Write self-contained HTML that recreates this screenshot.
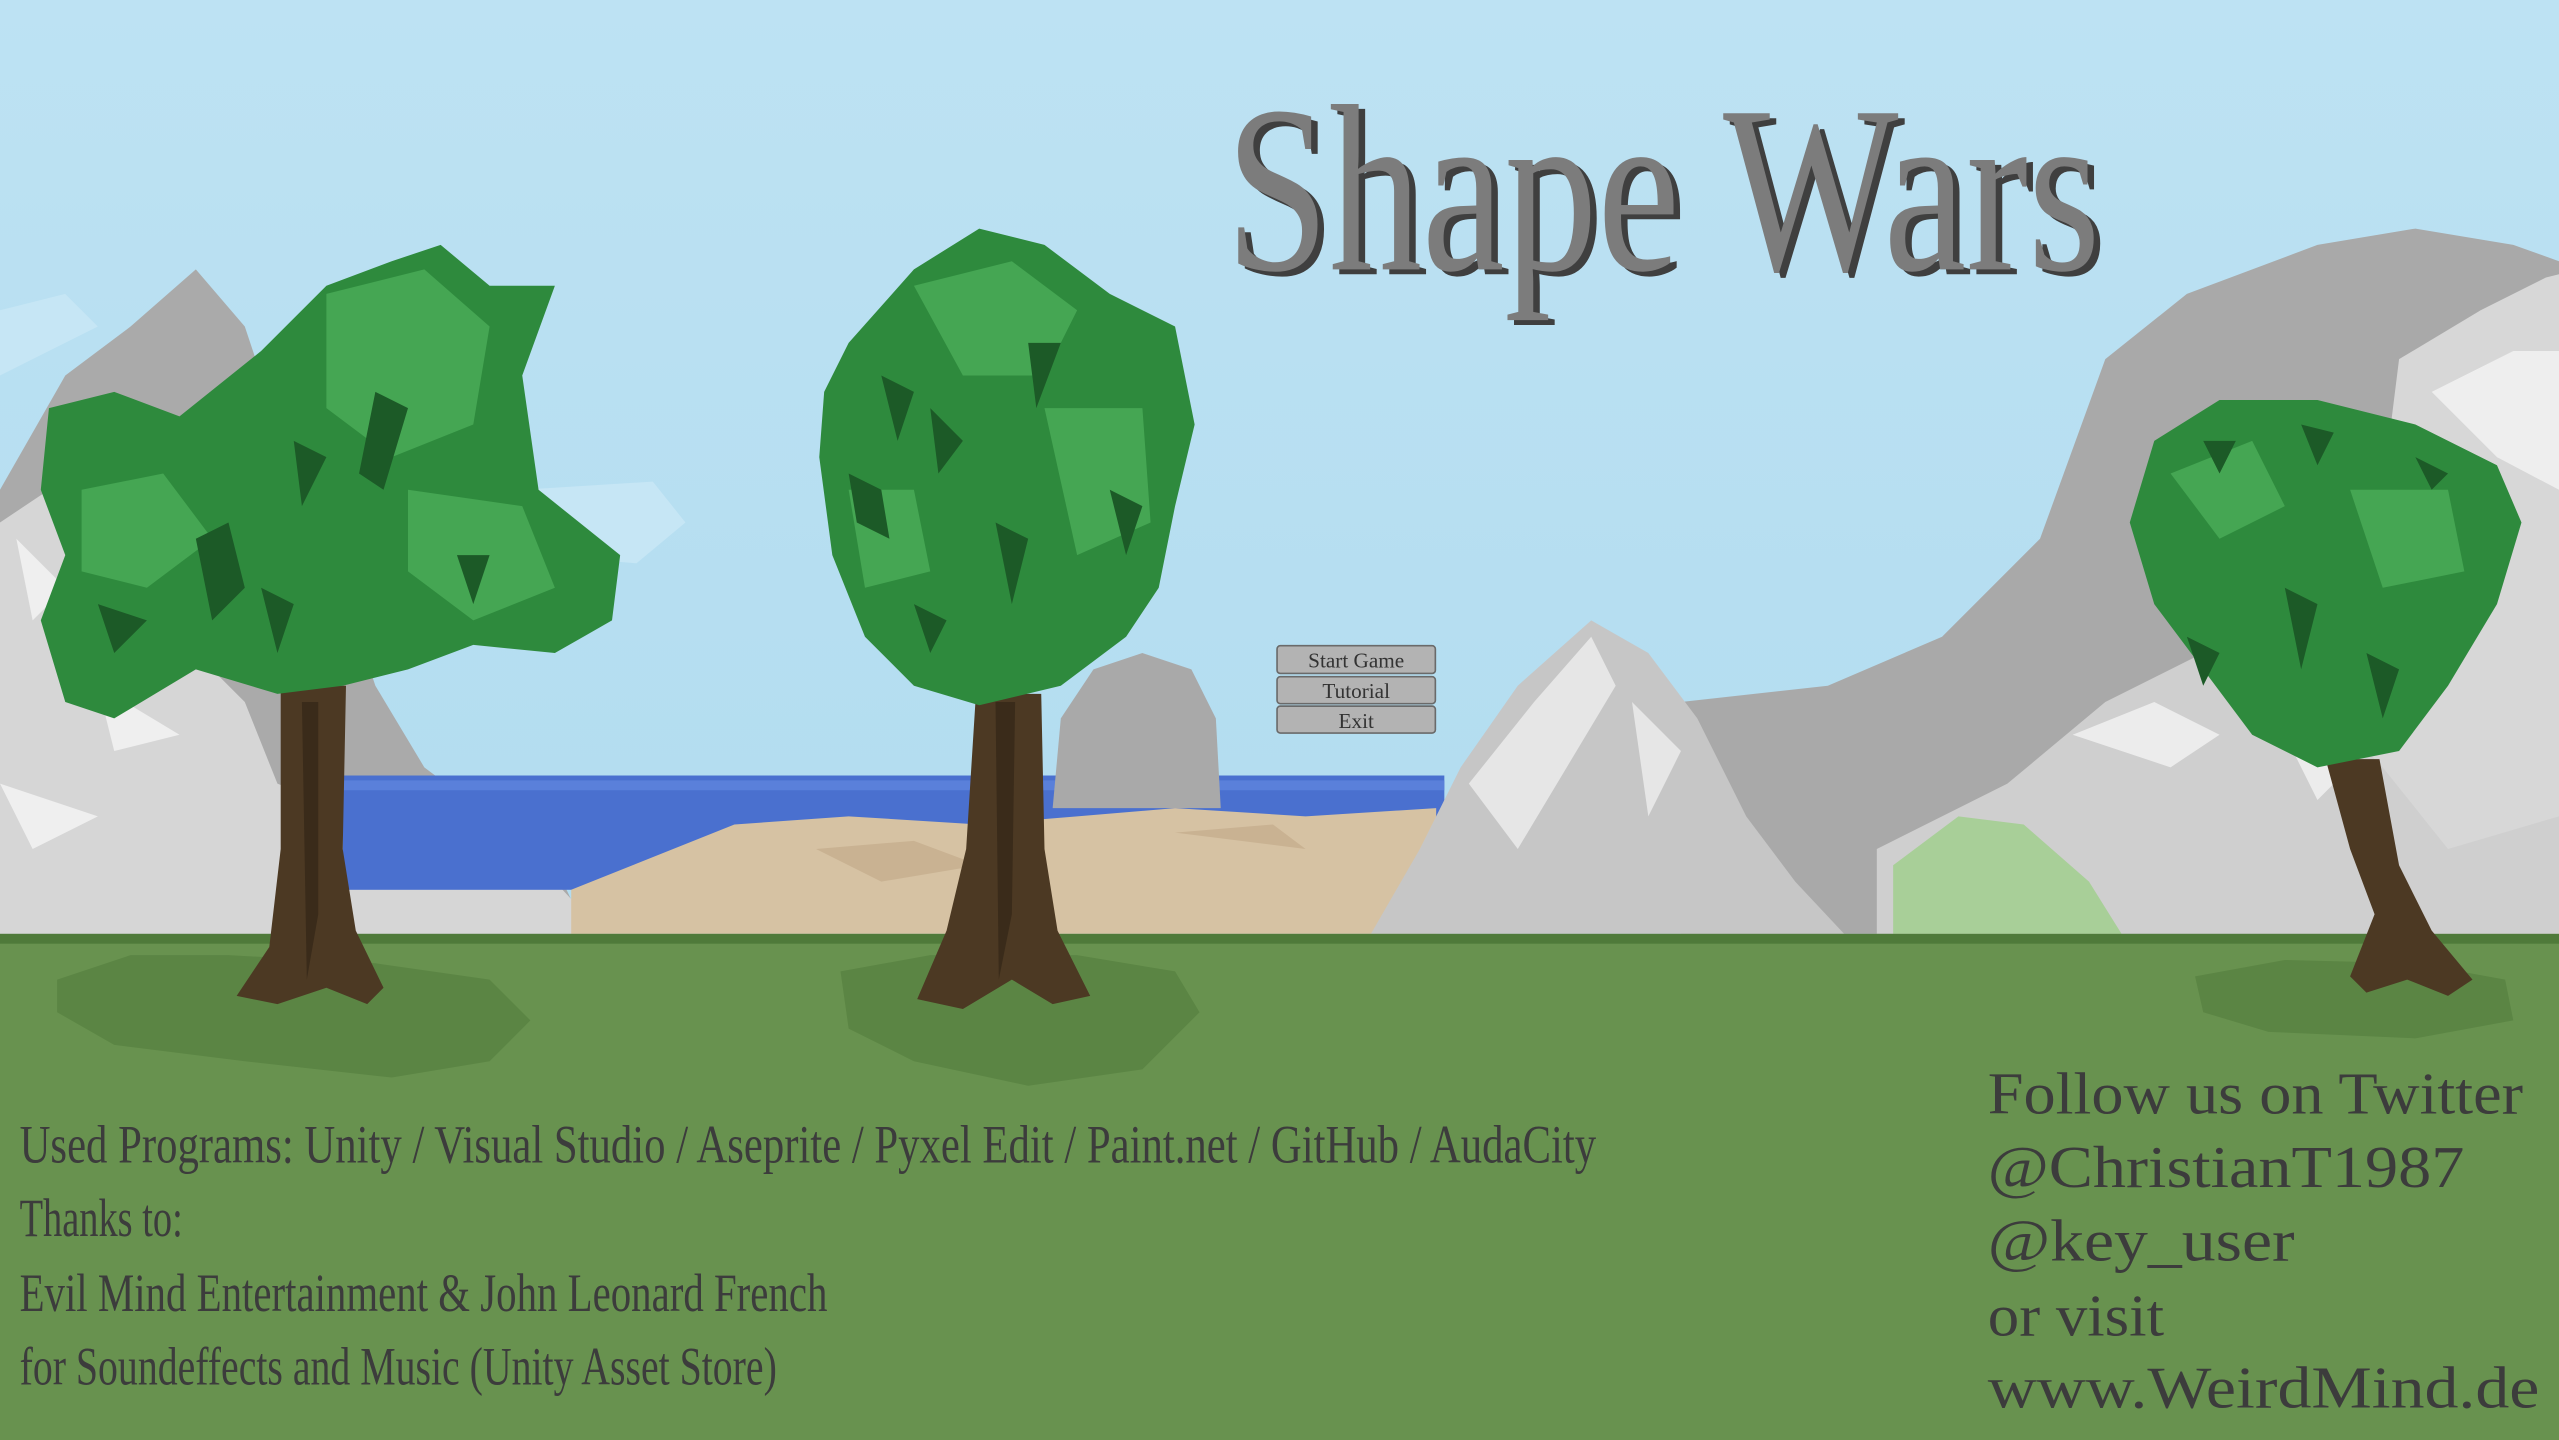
<!DOCTYPE html>
<html><head><meta charset="utf-8"><style>
html,body{margin:0;padding:0;width:2559px;height:1440px;overflow:hidden;background:#b0dcef}
svg{display:block}
</style></head><body>
<svg width="2559" height="1440" viewBox="0 0 1568 882" preserveAspectRatio="none" xmlns="http://www.w3.org/2000/svg">
<defs>
<linearGradient id="sky" x1="0" y1="0" x2="0" y2="1"><stop offset="0" stop-color="#bde2f3"/><stop offset="1" stop-color="#acd9ee"/></linearGradient>
</defs>
<rect width="1568" height="882" fill="url(#sky)"/>
<!-- clouds -->
<path d="M0 190 L40 180 L60 200 L20 220 L0 230Z" fill="#c6e6f5"/>
<path d="M320 300 L400 295 L420 320 L390 345 L330 340Z" fill="#c6e6f5"/>
<!-- big back gray mountain right -->
<path d="M1030 430 L1120 420 L1190 390 L1250 330 L1290 220 L1340 180 L1420 150 L1480 140 L1540 150 L1568 160 L1568 572 L1030 572Z" fill="#a9a9a9"/>
<!-- right white mountain -->
<path d="M1470 220 L1520 190 L1560 170 L1568 168 L1568 572 L1460 572 L1450 420 L1460 300Z" fill="#d7d7d7"/>
<path d="M1490 240 L1540 215 L1568 215 L1568 300 L1530 280Z" fill="#eeeeee"/>
<!-- right lower white mountains -->
<path d="M1150 520 L1230 480 L1290 430 L1350 400 L1420 430 L1460 470 L1500 520 L1568 500 L1568 572 L1150 572Z" fill="#cfcfcf"/>
<path d="M1270 450 L1320 430 L1360 450 L1330 470Z M1400 450 L1440 470 L1420 490Z" fill="#ececec"/>
<!-- green hill -->
<path d="M1160 530 L1200 500 L1240 505 L1280 540 L1300 572 L1160 572Z" fill="#a8cf98"/>
<!-- left mountains -->
<path d="M0 300 L40 230 L80 200 L120 165 L150 200 L170 260 L200 330 L230 420 L260 470 L300 500 L340 530 L360 572 L0 572Z" fill="#aaaaaa"/>
<path d="M0 320 L30 300 L60 330 L90 380 L120 400 L150 430 L170 480 L220 500 L280 520 L340 540 L370 572 L0 572Z" fill="#d6d6d6"/>
<path d="M10 330 L40 360 L20 380Z M60 420 L110 450 L70 460Z M0 480 L60 500 L20 520Z" fill="#efefef"/>
<!-- sea -->
<rect x="210" y="475" width="675" height="70" fill="#4a70cf"/>
<rect x="210" y="478" width="675" height="6" fill="#5a80da"/>
<!-- gray hump -->
<path d="M645 495 L650 440 L670 410 L700 400 L730 410 L745 440 L748 495Z" fill="#a9a9a9"/>
<!-- sand -->
<path d="M350 545 L400 525 L450 505 L520 500 L600 505 L660 500 L720 495 L800 500 L880 495 L880 572 L350 572Z" fill="#d6c2a3"/>
<path d="M500 520 L560 515 L600 530 L540 540Z M720 510 L780 505 L800 520Z" fill="#c9b292"/>
<!-- center mountain -->
<path d="M840 572 L870 520 L895 470 L930 420 L975 380 L1010 400 L1040 440 L1070 500 L1100 540 L1130 572Z" fill="#c6c6c6"/>
<path d="M900 480 L940 430 L975 390 L990 420 L960 470 L930 520Z M1000 430 L1030 460 L1010 500Z" fill="#e6e6e6"/>
<!-- ground -->
<rect x="0" y="572" width="1568" height="310" fill="#68924f"/>
<rect x="0" y="572" width="1568" height="6" fill="#4f7a3a"/>
<!-- shadows -->
<path d="M35 600 L80 585 L140 585 L230 590 L300 600 L325 625 L300 650 L240 660 L150 650 L70 640 L35 620Z" fill="#5b8544"/>
<path d="M515 595 L570 585 L660 585 L720 595 L735 620 L700 655 L630 665 L560 650 L520 630Z" fill="#5b8544"/>
<path d="M1345 598 L1400 588 L1480 590 L1535 600 L1540 625 L1480 636 L1390 632 L1350 620Z" fill="#5b8544"/>
<!-- tree1 -->
<path d="M172 420 L212 420 L210 520 L218 570 L235 605 L225 615 L200 605 L170 615 L145 610 L165 580 L172 520Z" fill="#4c3923"/>
<path d="M185 430 L195 430 L195 560 L188 600Z" fill="#3a2b1a"/>
<path d="M30 250 L70 240 L110 255 L160 215 L200 175 L240 160 L270 150 L300 175 L340 175 L320 230 L330 300 L380 340 L375 380 L340 400 L290 395 L250 410 L210 420 L170 425 L120 410 L70 440 L40 430 L25 380 L40 340 L25 300Z" fill="#2e8a3d"/>
<path d="M200 180 L260 165 L300 200 L290 260 L240 280 L200 250Z M50 300 L100 290 L130 330 L90 360 L50 350Z M250 300 L320 310 L340 360 L290 380 L250 350Z" fill="#45a653"/>
<path d="M120 330 L140 320 L150 360 L130 380Z M230 240 L250 250 L235 300 L220 290Z M180 270 L200 280 L185 310Z M280 340 L300 340 L290 370Z M60 370 L90 380 L70 400Z M160 360 L180 370 L170 400Z" fill="#1c5a27"/>
<!-- tree2 -->
<path d="M598 425 L638 425 L640 520 L648 570 L668 610 L645 615 L620 600 L590 618 L562 612 L580 570 L592 520Z" fill="#4c3923"/>
<path d="M610 430 L622 430 L620 560 L612 600Z" fill="#3a2b1a"/>
<path d="M520 210 L560 165 L600 140 L640 150 L680 180 L720 200 L732 260 L720 310 L710 360 L690 390 L650 420 L600 432 L560 420 L530 390 L510 340 L502 280 L505 240Z" fill="#2e8a3d"/>
<path d="M560 175 L620 160 L660 190 L640 230 L590 230Z M640 250 L700 250 L705 320 L660 340Z M520 300 L560 300 L570 350 L530 360Z" fill="#45a653"/>
<path d="M540 230 L560 240 L550 270Z M630 210 L650 210 L635 250Z M520 290 L540 300 L545 330 L525 320Z M570 250 L590 270 L575 290Z M610 320 L630 330 L620 370Z M560 370 L580 380 L570 400Z M680 300 L700 310 L690 340Z" fill="#1c5a27"/>
<!-- tree3 -->
<path d="M1425 465 L1458 465 L1470 530 L1490 570 L1515 600 L1500 610 L1475 600 L1450 608 L1440 598 L1455 560 L1440 520Z" fill="#4c3923"/>
<path d="M1320 270 L1360 245 L1420 245 L1480 260 L1530 285 L1545 320 L1530 370 L1500 420 L1470 460 L1420 470 L1380 450 L1350 410 L1320 370 L1305 320Z" fill="#2e8a3d"/>
<path d="M1330 290 L1380 270 L1400 310 L1360 330Z M1440 300 L1500 300 L1510 350 L1460 360Z" fill="#45a653"/>
<path d="M1350 270 L1370 270 L1360 290Z M1410 260 L1430 265 L1420 285Z M1400 360 L1420 370 L1410 410Z M1340 390 L1360 400 L1350 420Z M1450 400 L1470 410 L1460 440Z M1480 280 L1500 290 L1490 300Z" fill="#1c5a27"/>
<!-- title -->
<text x="755" y="168" font-family="Liberation Serif, serif" font-size="146" fill="#3f3f3f" textLength="536" lengthAdjust="spacingAndGlyphs">Shape Wars</text>
<text x="751" y="165" font-family="Liberation Serif, serif" font-size="146" fill="#7c7c7c" textLength="536" lengthAdjust="spacingAndGlyphs">Shape Wars</text>
<!-- buttons -->
<g font-family="Liberation Serif, serif" font-size="13" fill="#333" text-anchor="middle">
<rect x="782.5" y="395.5" width="97" height="17" rx="2" fill="#b3b3b3" stroke="#6a6a6a"/>
<text x="831" y="409">Start Game</text>
<rect x="782.5" y="414.5" width="97" height="16.5" rx="2" fill="#b3b3b3" stroke="#6a6a6a"/>
<text x="831" y="427.5">Tutorial</text>
<rect x="782.5" y="432.5" width="97" height="16.5" rx="2" fill="#b3b3b3" stroke="#6a6a6a"/>
<text x="831" y="446">Exit</text>
</g>
<!-- credits -->
<g font-family="Liberation Serif, serif" font-size="33" fill="#3c3c3c">
<text x="12" y="712" textLength="966" lengthAdjust="spacingAndGlyphs">Used Programs: Unity / Visual Studio / Aseprite / Pyxel Edit / Paint.net / GitHub / AudaCity</text>
<text x="12" y="757" textLength="100" lengthAdjust="spacingAndGlyphs">Thanks to:</text>
<text x="12" y="803" textLength="495" lengthAdjust="spacingAndGlyphs">Evil Mind Entertainment &amp; John Leonard French</text>
<text x="12" y="848" textLength="464" lengthAdjust="spacingAndGlyphs">for Soundeffects and Music (Unity Asset Store)</text>
</g>
<g font-family="Liberation Serif, serif" font-size="36" fill="#3c3c3c">
<text x="1218" y="682" textLength="328" lengthAdjust="spacingAndGlyphs">Follow us on Twitter</text>
<text x="1218" y="727" textLength="292" lengthAdjust="spacingAndGlyphs">@ChristianT1987</text>
<text x="1218" y="772" textLength="188" lengthAdjust="spacingAndGlyphs">@key_user</text>
<text x="1218" y="818" textLength="108" lengthAdjust="spacingAndGlyphs">or visit</text>
<text x="1218" y="862" textLength="338" lengthAdjust="spacingAndGlyphs">www.WeirdMind.de</text>
</g>
</svg>
</body></html>
